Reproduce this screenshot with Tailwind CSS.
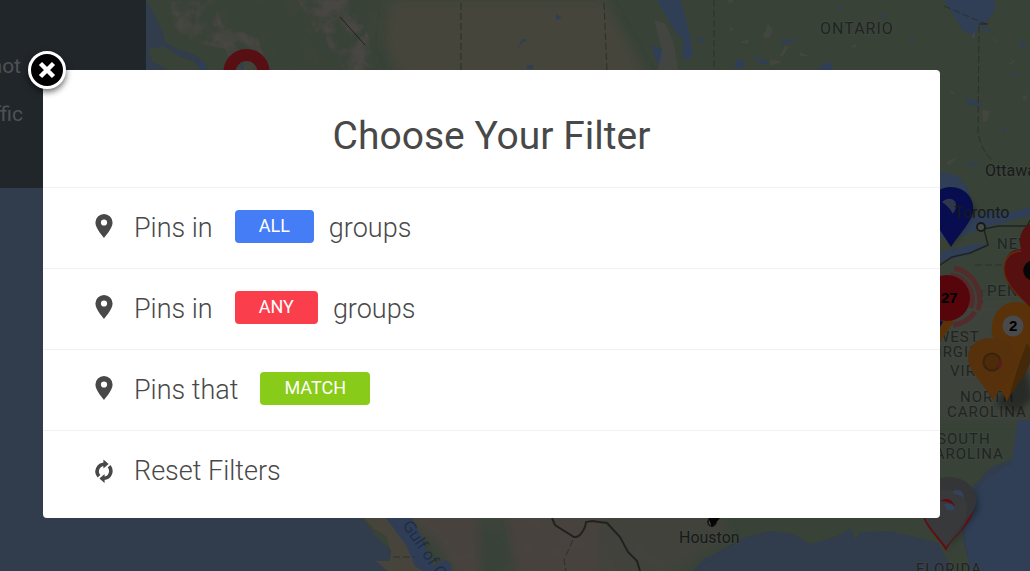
<!DOCTYPE html>
<html lang="en">
  <head>
    <meta charset="UTF-8" />
    <meta name="viewport" content="width=device-width, initial-scale=1.0" />
    <title>Choose Your Filter</title>
    <script src="https://cdn.jsdelivr.net/npm/@tailwindcss/browser@4"></script>
  </head>
  <body class="relative min-h-screen overflow-hidden bg-[#313c4c] font-['Roboto',sans-serif] text-[#484848]">
    <!-- Map -->
    <svg
      class="absolute inset-0 w-full h-full"
      viewBox="0 0 1030 571"
      preserveAspectRatio="xMidYMid slice"
      aria-hidden="true"
    >
      <defs>
        <filter id="soft" x="-5%" y="-5%" width="110%" height="110%"><feGaussianBlur stdDeviation="5" /></filter>
        <filter id="shade" x="-40%" y="-40%" width="180%" height="180%"><feGaussianBlur stdDeviation="3" /></filter>
        <filter id="relief" x="0" y="0" width="100%" height="100%" color-interpolation-filters="sRGB">
          <feTurbulence type="fractalNoise" baseFrequency="0.06" numOctaves="4" seed="8" />
          <feColorMatrix values="0 0 0 0 .31  0 0 0 0 .285  0 0 0 0 .28  3 0 0 0 -1.1" />
          <feComposite operator="in" in2="SourceGraphic" />
        </filter>
      </defs>
      <rect width="1030" height="571" fill="#313c4c" />
      <!-- land -->
      <path fill="#384237" d="M146 0l6 10 5 10 5 10 3 12 12 7 12 4 10 4 7 10 7 16 160 420-10 15 12 18 16 14 8 16-2 12-14-1 18 20h270l14-16 18-22 24-12 16-9 28-7 22 3 18 10 24-7 16-9 4 12 5-8 30-1 26 6 22 6 12 22 4 38h24l-5-28-9-31-5-35 9-17 22-24 30-12 20-15 18-10V0z" />
      <path fill="#384237" d="M149 49l14-3 16 10 14 5 9 10h-32l-18-10z" />
      <g filter="url(#soft)">
        <path fill="#45443b" d="M390 0h215l45 80H398l-14-40z" />
        <path fill="#46433d" d="M384 510h251l50 10 15 20-30 40H460l-26-40z" />
        <path fill="#40433a" d="M600 510h120l10 25-70 50h-60z" />
        <path fill="#384237" d="M478 510h26l14 70h-38z" />
        <path fill="#3d433a" d="M935 300h100v120h-100z" />
      </g>
      <path fill="#4a4444" opacity=".75" filter="url(#relief)" d="M172 2l42-2 8 25 35 12 12 34h-34l-10-22-40-9-16-20zM298 0h52l18 34 6 36h-30l-28-38z" />
      <path fill="#4a4444" opacity=".15" filter="url(#relief)" d="M165 0h225v70H215zM450 518h170l60 53H450z" />
      <!-- Baja and the gulf -->
      <path fill="#46443b" d="M362 516l12 13 12 7 5 15-1 10-14 0 16 14h50l-24-26-14-18-8-17z" />
      <path fill="#2f3e56" d="M384 516h27l10 20 7 18 5 12 12-6 5 3 4 14h-22l-17-11-9-21-14-19z" />
      <!-- water -->
      <g fill="#303f55">
        <path d="M657 0h23l5 16 5 20 3 17-4 7-7-2 1-18-9-10-9-16zM651 45l12 5 4 9-5 5-6-3zM944 0h50l2 7-9 16-8 0 12 7-4 3-8-9-4 13-12-7-12-19zM823 63h9v7h-14zM940 172l16 3 8 6-24 2zM556 14l6 4-6 2zM522 43l-4 5 4-9 5 1zM527 65h6v4h-6z" />
        <path d="M696 40l9-3-2 6zM735 61l8-2 1 9h-9zM753 56l12 4 4 4-8 0zM780 42l14-4 2 2-13 5zM837 5l6 3-5 2zM882 14h3v4h-3zM911 37h2v6h-2zM965 98l14 4 2 4-13-2zM1021 41h4v6h-4zM1012 73h4v3h-4zM1003 127h3v5h-3zM967 161l14 4-9 1zM240 65l5 2-3 5zM200 60l5 3 2 7h-8zM325 48l2 5-3-2z" />
        <path d="M940 172l10 6 14 5 6 10-10 7-20-4zM940 238l24-2 18-8 48-12v-9l-22 6-22-2-24 11-22 8zM940 252l34-8 16 1-24 11-26 6zM1018 420h12v151h-60l-4-29-4-24 12-24 15-18 22-11z" />
      </g>
      <g fill="#4a4845" opacity=".65">
        <path d="M768 24l5 5-4 10-6-2zM740 42l10-3-3 5zM785 46l4 1-6 9h-3zM800 52l9 4-9 0zM770 59l12 3-12 4zM850 47l7-4-2 5zM728 0l8-1-7 5zM971 37l4-7v8zM992 37l6 5-4-1zM1007 65l8-6-1 4zM982 110l8 1-3 10-4 1zM950 90l5 2-3 3zM946 162l13-6-10 9zM1022 97l6-2-4 7zM730 26l4 3-4 2zM654 20l12 4 8 20 4 26h-20l4-20z" />
      </g>
      <!-- borders -->
      <g fill="none" stroke="#2b302c" stroke-width="1" stroke-dasharray="7 3">
        <path d="M461 3v67M604 3l3 67M714 0v70M979 26l-1 105q2 18 15 30M944 6l42 18M393 557h22M573 540l-9 20 2 11M975 265h55M982 290v14" />
      </g>
      <g fill="none" stroke="#20221f" stroke-width="2">
        <path d="M552 518l3 7 19 12q6 1 11-10l1-5 6-1 15 2 13 14M620 537l8 15 9 9 3 10" />
        <path d="M940 265l12-8 18-4 18-8-4-16 14-3h29l4-7" stroke-width="1.5" />
        <path d="M979 24l9 0M340 17l25 28" stroke-width="1" />
      </g>
      <!-- markers that lie under the labels -->
      <g fill="none" stroke="#5a262a" stroke-width="5" opacity=".8">
        <path d="M951 275a25 25 0 0 1 20 33M954 268a32 32 0 0 1 24 42M953 325a31 31 0 0 0 22-13" />
      </g>
      <path fill="#000" opacity=".35" filter="url(#shade)" d="M950 248l25-38-10-15z" />
      <path fill="#070d4f" d="M951 247l-17-26c-10-20 2-34 16-34 16 0 25 12 23 25-1 9-13 21-22 35z" />
      <path fill="#30374c" d="M942 202c7-6 15-3 14 5-1 5-3 5-3 7-3-6-7-9-11-12z" />

      <!-- map labels -->
      <g fill="#171a19" font-family="Roboto, sans-serif" stroke="#474a48" stroke-opacity=".4" stroke-width="2" paint-order="stroke">
        <text x="985" y="176" font-size="16">Ottawa</text>
        <text x="954" y="218" font-size="16" stroke="none">Toronto</text>
        <text x="679" y="543" font-size="16">Houston</text>
        <g font-size="15" letter-spacing="1" fill="#202422">
          <text x="820" y="34" font-size="16">ONTARIO</text>
          <text x="997" y="249">NEW</text>
          <text x="987" y="296">PENN</text>
          <text x="936" y="342">WEST</text>
          <text x="927" y="357">VIRGINIA</text>
          <text x="950" y="376">VIRGINIA</text>
          <text x="960" y="402">NORTH</text>
          <text x="947" y="417">CAROLINA</text>
          <text x="937" y="444">SOUTH</text>
          <text x="924" y="459">CAROLINA</text>
          <text x="916" y="574">FLORIDA</text>
        </g>
      </g>
      <text transform="translate(402 525) rotate(56)" font-size="16" font-family="Open Sans, sans-serif" fill="#1c2c46">Gulf of California</text>
      <circle cx="981" cy="227" r="4" fill="#484a47" stroke="#171a19" stroke-width="1.8" />
      <circle cx="712" cy="522" r="4" fill="#484a47" stroke="#171a19" stroke-width="1.8" />
      <path fill="#050505" d="M708 517h13l-9 10z" />

      <!-- markers -->
      <path fill="none" stroke="#580f13" stroke-width="12" d="M230 76a17 17 0 1 1 33 0" />
      <g fill="#000" opacity=".35" filter="url(#shade)">
        <path d="M995 405l28-47 10 40-15 14zM948 550l30-40-2-22z" />
      </g>
      <path fill="#59320a" d="M940 316l14 5-14 21z" />
      <path fill="#070d4f" d="M940 320l3 2-3 5z" />
      <circle cx="947" cy="298" r="23" fill="#56060a" />
      <path fill="#56100f" d="M1030 224c-8 4-12 12-9 25-10 0-18 8-17 22 1 15 17 26 26 37z" />
      <path fill="#060606" d="M1030 261c-9 4-9 15 0 19z" />
      <path fill="none" stroke="#5f300b" stroke-width="1.3" d="M1021 251c-10 0-18 8-17 20 1 12 13 24 26 37" />
      <path fill="#59320a" d="M1007 401l-15-27c-8-16 2-25 2-34-7-17 3-37 21-38q9 0 15 5v53c-7 20-16 27-23 41z" />
      <path fill="#432809" d="M1008 400l10-33 9-24 3 5v15c-7 18-15 24-22 37z" />
      <circle cx="1013" cy="326" r="10.5" fill="#484a4b" />
      <path fill="#57310b" d="M993 401c-6-15-25-28-25-43 0-13 10-20 24-20 15 0 25 10 25 22 0 14-17 26-24 41z" />
      <circle cx="992" cy="362" r="8.5" fill="#4b2b09" stroke="#3a230c" stroke-width="2" />
      <path fill="#5b1c1f" d="M1001 358q3 7-3 12-1-8 3-12z" />
      <path fill="#650b12" d="M946 551c-6-12-24-26-24-40 0-15 10-24 25-24 16 0 27 10 26 23-1 15-21 27-27 41z" />
      <path fill="#343536" d="M948 545l-26-34V492c5-9 16-15 28-15 15 1 27 10 26 26-1 8-8 14-10 19-4 8-12 15-18 23z" />
      <path fill="#38393a" d="M946 547c-6-10-23-24-23-38 0-13 10-19 22-19 13 0 24 7 22 21-1 12-14 24-21 36z" />
      <path fill="#66080f" d="M940 501q10-6 15 5-6-5-15-5z" />
      <path fill="#33435c" d="M944 504q8-2 11 5-5 3-9 0zM953 491q10-4 11 7-5-4-11-4z" />
      <g font-family="Liberation Sans, sans-serif" font-weight="700" fill="#000">
        <text x="941" y="303" font-size="15">27</text>
        <text x="1009" y="331" font-size="15">2</text>
      </g>
    </svg>

    <!-- Sidebar notice -->
    <aside
      class="absolute top-0 left-0 w-[146px] h-[188px] bg-[#21262b] pt-[50px] overflow-hidden text-[21px] leading-8 font-normal text-[#4e5255]"
    >
      <p class="w-[21px] mb-4 flex justify-end whitespace-nowrap">not</p>
      <p class="w-[23px] flex justify-end whitespace-nowrap">traffic</p>
    </aside>

    <!-- Filter dialog -->
    <main class="relative pt-[70px] pl-[43px] pr-[90px]">
      <section role="dialog" aria-labelledby="filter-title" class="relative rounded-[4px] bg-white">
        <button
          type="button"
          aria-label="Close"
          class="absolute -top-[19px] -left-[15px] w-[38px] h-[38px] rounded-full border-[3px] border-white bg-black flex items-center justify-center shadow-[0_3px_6px_rgba(0,0,0,0.6)]"
        >
          <svg class="w-5 h-5" viewBox="0 0 20 20" fill="none" stroke="#fff" stroke-width="4.5">
            <path d="M3.5 3.5l13 13M16.500 3.500l-13 13" />
          </svg>
        </button>

        <h1 id="filter-title" class="pt-[42px] pb-[27px] text-center text-[39px] leading-12 font-normal">
          Choose Your Filter
        </h1>

        <ul class="text-[27px] leading-8 font-light">
          <li class="flex items-center h-[81px] pl-[52px] pb-1 border-t border-[#f1f1f1]">
            <svg class="w-[18px] h-6 mr-[21px]" viewBox="0 0 18 24" fill="#484848">
              <path fill-rule="evenodd" d="M9 0a8.600 8.600 0 0 0-8.600 8.600C.4 14.600 9 24 9 24s8.600-9.400 8.600-15.400A8.600 8.600 0 0 0 9 0zm0 5.400a3.100 3.100 0 1 1 0 6.200 3.100 3.100 0 0 1 0-6.200z" />
            </svg>
            <span class="pt-1">Pins in</span>
            <button type="button" class="h-[33px] ml-[22px] mr-[15px] px-6 pb-px rounded-[4px] bg-[#457df7] text-[18px] font-normal text-white">ALL</button>
            <span class="pt-1">groups</span>
          </li>
          <li class="flex items-center h-[81px] pl-[52px] pb-1 border-t border-[#f1f1f1]">
            <svg class="w-[18px] h-6 mr-[21px]" viewBox="0 0 18 24" fill="#484848">
              <path fill-rule="evenodd" d="M9 0a8.600 8.600 0 0 0-8.600 8.600C.4 14.600 9 24 9 24s8.600-9.400 8.600-15.400A8.600 8.600 0 0 0 9 0zm0 5.400a3.100 3.100 0 1 1 0 6.200 3.100 3.100 0 0 1 0-6.200z" />
            </svg>
            <span class="pt-1">Pins in</span>
            <button type="button" class="h-[33px] ml-[22px] mr-[15px] px-6 pb-px rounded-[4px] bg-[#fb3e4c] text-[18px] font-normal text-white">ANY</button>
            <span class="pt-1">groups</span>
          </li>
          <li class="flex items-center h-[81px] pl-[52px] pb-1 border-t border-[#f1f1f1]">
            <svg class="w-[18px] h-6 mr-[21px]" viewBox="0 0 18 24" fill="#484848">
              <path fill-rule="evenodd" d="M9 0a8.600 8.600 0 0 0-8.600 8.600C.4 14.600 9 24 9 24s8.600-9.400 8.600-15.400A8.600 8.600 0 0 0 9 0zm0 5.400a3.100 3.100 0 1 1 0 6.200 3.100 3.100 0 0 1 0-6.200z" />
            </svg>
            <span class="pt-1">Pins that</span>
            <button type="button" class="h-[33px] ml-[22px] px-6 pb-px rounded-[4px] bg-[#88cb18] text-[18px] font-normal text-white">MATCH</button>
          </li>
          <li class="border-t border-[#f1f1f1]">
            <button type="button" class="flex items-center w-full h-[87px] pl-[52px] pb-2">
              <svg class="w-[18px] h-6 mr-[21px] overflow-visible" viewBox="0 0 18 24">
                <g fill="none" stroke="#484848" stroke-width="3.600">
                  <path d="M4 17.200A7.200 7.200 0 0 1 9 5.200" />
                  <path d="M14 7.300A7.200 7.200 0 0 1 9 19.300" />
                </g>
                <path fill="#484848" d="M8.400 .4l5.200 4.500-5.200 4.600zM9.600 24.100l-5.200-4.500 5.200-4.600z" />
              </svg>
              <span>Reset Filters</span>
            </button>
          </li>
        </ul>
      </section>
    </main>
  </body>
</html>
